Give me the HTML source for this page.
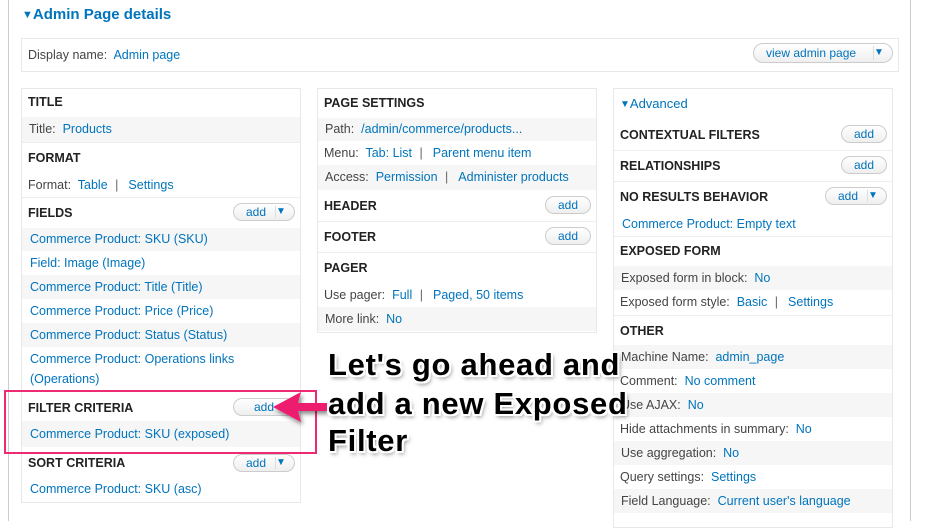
<!DOCTYPE html>
<html><head><meta charset="utf-8"><style>
body{margin:0;width:925px;height:521px;overflow:hidden;background:#fff;position:relative;font-family:"Liberation Sans",Arial,sans-serif;font-size:12.5px;color:#444}
.a{position:absolute}
.box{position:absolute;border:1px solid #e8e8e8;box-sizing:border-box}
.r{position:absolute;box-sizing:border-box;padding-left:7px;white-space:nowrap}
.g{background:#f6f6f6}
.h{font-weight:bold;color:#222;font-size:12.5px}
.l{color:#0074bd}
.sep{color:#666;margin:0 10px 0 4px}
.btn{position:absolute;height:18px;border:1px solid #ccc;border-radius:10px;background:linear-gradient(#fff,#efefef);box-sizing:border-box;color:#0074bd;font-size:12px;line-height:16px;text-align:center}
.btn .dd{position:absolute;right:0;top:2px;width:18px;height:12px;border-left:1px solid #ddd;font-size:10px;line-height:12px;color:#0074bd}
.line{position:absolute;height:1px;background:#eee}
.ann{position:absolute;left:328px;font-family:"Liberation Sans",Arial,sans-serif;font-weight:bold;font-size:31px;color:#000;letter-spacing:0.7px;white-space:nowrap;text-shadow:-2px 0 #fff,2px 0 #fff,0 -2px #fff,0 2px #fff,-2px -2px #fff,2px 2px #fff,-2px 2px #fff,2px -2px #fff,2px 3px 4px rgba(0,0,0,.5)}
</style></head><body>
<div class="a" style="left:8px;top:0;width:1px;height:521px;background:#ccc"></div>
<div class="a" style="left:910px;top:0;width:1px;height:521px;background:#ccc"></div>
<div class="a l" style="left:22px;top:6px;font-size:15px;font-weight:bold"><span style="font-size:11px;vertical-align:1px">▼</span>Admin Page details</div>
<div class="box" style="left:21px;top:38px;width:878px;height:34px"></div>
<div class="r" style="left:21px;top:46px;line-height:18px">Display name:&nbsp; <span class="l">Admin page</span></div>
<div class="btn" style="left:753px;top:43px;width:140px;height:20px;line-height:18px;text-align:left;padding-left:12px">view admin page<span class="dd" style="height:14px;line-height:14px">▼</span></div>

<!-- LEFT -->
<div class="box" style="left:21px;top:88px;width:280px;height:415px"></div>
<div class="r h" style="left:21px;top:88px;width:280px;height:29px;line-height:29px">TITLE</div>
<div class="r g" style="left:22px;top:117px;width:278px;height:25px;line-height:25px">Title:&nbsp; <span class="l">Products</span></div>
<div class="line" style="left:22px;top:142px;width:278px"></div>
<div class="r h" style="left:21px;top:143px;width:280px;height:30px;line-height:30px">FORMAT</div>
<div class="r" style="left:21px;top:173px;width:280px;height:24px;line-height:24px">Format:&nbsp; <span class="l">Table</span><span class="sep"> |</span><span class="l">Settings</span></div>
<div class="line" style="left:22px;top:197px;width:278px"></div>
<div class="r h" style="left:21px;top:198px;width:280px;height:30px;line-height:30px">FIELDS</div>
<div class="btn" style="left:233px;top:203px;width:62px;text-align:left;padding-left:12px">add<span class="dd">▼</span></div>
<div class="r g l" style="left:22px;top:228px;width:278px;height:23px;line-height:23px;padding-left:8px">Commerce Product: SKU (SKU)</div>
<div class="r l" style="left:22px;top:251px;width:278px;height:24px;line-height:24px;padding-left:8px">Field: Image (Image)</div>
<div class="r g l" style="left:22px;top:275px;width:278px;height:24px;line-height:24px;padding-left:8px">Commerce Product: Title (Title)</div>
<div class="r l" style="left:22px;top:299px;width:278px;height:24px;line-height:24px;padding-left:8px">Commerce Product: Price (Price)</div>
<div class="r g l" style="left:22px;top:323px;width:278px;height:24px;line-height:24px;padding-left:8px">Commerce Product: Status (Status)</div>
<div class="r l" style="left:22px;top:347px;width:278px;height:44px;line-height:20px;padding-left:8px;padding-top:2px">Commerce Product: Operations links<br>(Operations)</div>
<div class="r h" style="left:21px;top:393px;width:280px;height:28px;line-height:30px">FILTER CRITERIA</div>
<div class="btn" style="left:233px;top:398px;width:62px">add</div>
<div class="r g l" style="left:22px;top:421px;width:278px;height:26px;line-height:26px;padding-left:8px">Commerce Product: SKU (exposed)</div>
<div class="r h" style="left:21px;top:449px;width:280px;height:28px;line-height:28px">SORT CRITERIA</div>
<div class="btn" style="left:233px;top:454px;width:62px;text-align:left;padding-left:12px">add<span class="dd">▼</span></div>
<div class="r l" style="left:22px;top:477px;width:278px;height:25px;line-height:25px;padding-left:8px">Commerce Product: SKU (asc)</div>
<div class="a" style="left:4px;top:390px;width:309px;height:60px;border:2px solid #ee2a72"></div>

<!-- MIDDLE -->
<div class="box" style="left:317px;top:88px;width:280px;height:245px"></div>
<div class="r h" style="left:317px;top:88px;width:280px;height:30px;line-height:30px">PAGE SETTINGS</div>
<div class="r g" style="left:318px;top:118px;width:278px;height:23px;line-height:23px">Path:&nbsp; <span class="l">/admin/commerce/products...</span></div>
<div class="r" style="left:317px;top:141px;width:280px;height:24px;line-height:24px">Menu:&nbsp; <span class="l">Tab: List</span><span class="sep"> |</span><span class="l">Parent menu item</span></div>
<div class="r g" style="left:318px;top:165px;width:278px;height:25px;line-height:25px">Access:&nbsp; <span class="l">Permission</span><span class="sep"> |</span><span class="l">Administer products</span></div>
<div class="r h" style="left:317px;top:191px;width:280px;height:30px;line-height:30px">HEADER</div>
<div class="btn" style="left:545px;top:196px;width:46px">add</div>
<div class="line" style="left:318px;top:221px;width:278px"></div>
<div class="r h" style="left:317px;top:222px;width:280px;height:30px;line-height:30px">FOOTER</div>
<div class="btn" style="left:545px;top:227px;width:46px">add</div>
<div class="line" style="left:318px;top:252px;width:278px"></div>
<div class="r h" style="left:317px;top:253px;width:280px;height:30px;line-height:30px">PAGER</div>
<div class="r" style="left:317px;top:283px;width:280px;height:24px;line-height:24px">Use pager:&nbsp; <span class="l">Full</span><span class="sep"> |</span><span class="l">Paged, 50 items</span></div>
<div class="r g" style="left:318px;top:307px;width:278px;height:24px;line-height:24px">More link:&nbsp; <span class="l">No</span></div>

<!-- RIGHT -->
<div class="box" style="left:613px;top:88px;width:280px;height:440px"></div>
<div class="r l" style="left:613px;top:95px;line-height:18px;font-size:13px"><span style="font-size:10px;vertical-align:1px">▼</span>Advanced</div>
<div class="r h" style="left:613px;top:121px;width:280px;height:29px;line-height:29px">CONTEXTUAL FILTERS</div>
<div class="btn" style="left:841px;top:125px;width:46px">add</div>
<div class="line" style="left:614px;top:150px;width:278px"></div>
<div class="r h" style="left:613px;top:151px;width:280px;height:30px;line-height:30px">RELATIONSHIPS</div>
<div class="btn" style="left:841px;top:156px;width:46px">add</div>
<div class="line" style="left:614px;top:181px;width:278px"></div>
<div class="r h" style="left:613px;top:182px;width:280px;height:30px;line-height:30px">NO RESULTS BEHAVIOR</div>
<div class="btn" style="left:825px;top:187px;width:62px;text-align:left;padding-left:12px">add<span class="dd">▼</span></div>
<div class="r l" style="left:614px;top:212px;width:278px;height:24px;line-height:24px;padding-left:8px">Commerce Product: Empty text</div>
<div class="line" style="left:614px;top:236px;width:278px"></div>
<div class="r h" style="left:613px;top:237px;width:280px;height:29px;line-height:29px">EXPOSED FORM</div>
<div class="r g" style="left:614px;top:266px;width:278px;height:24px;line-height:24px">Exposed form in block:&nbsp; <span class="l">No</span></div>
<div class="r" style="left:613px;top:290px;width:280px;height:25px;line-height:25px">Exposed form style:&nbsp; <span class="l">Basic</span><span class="sep"> |</span><span class="l">Settings</span></div>
<div class="line" style="left:614px;top:315px;width:278px"></div>
<div class="r h" style="left:613px;top:316px;width:280px;height:29px;line-height:30px">OTHER</div>
<div class="r g" style="left:614px;top:345px;width:278px;height:24px;line-height:24px">Machine Name:&nbsp; <span class="l">admin_page</span></div>
<div class="r" style="left:613px;top:369px;width:280px;height:24px;line-height:24px">Comment:&nbsp; <span class="l">No comment</span></div>
<div class="r g" style="left:614px;top:393px;width:278px;height:24px;line-height:24px">Use AJAX:&nbsp; <span class="l">No</span></div>
<div class="r" style="left:613px;top:417px;width:280px;height:24px;line-height:24px">Hide attachments in summary:&nbsp; <span class="l">No</span></div>
<div class="r g" style="left:614px;top:441px;width:278px;height:24px;line-height:24px">Use aggregation:&nbsp; <span class="l">No</span></div>
<div class="r" style="left:613px;top:465px;width:280px;height:24px;line-height:24px">Query settings:&nbsp; <span class="l">Settings</span></div>
<div class="r g" style="left:614px;top:489px;width:278px;height:24px;line-height:24px">Field Language:&nbsp; <span class="l">Current user's language</span></div>

<!-- annotation -->
<svg class="a" style="left:265px;top:385px" width="70" height="45">
<defs><filter id="s" x="-20%" y="-20%" width="150%" height="160%"><feDropShadow dx="2" dy="3" stdDeviation="2" flood-opacity=".45"/></filter></defs>
<path d="M8 22 L36 7 L33 18 L62 18 L62 26 L33 26 L36 37 Z" fill="#ee1e6e" filter="url(#s)"/>
</svg>
<div class="ann" style="top:347px">Let's go ahead and</div>
<div class="ann" style="top:386px">add a new Exposed</div>
<div class="ann" style="top:423px">Filter</div>
</body></html>
